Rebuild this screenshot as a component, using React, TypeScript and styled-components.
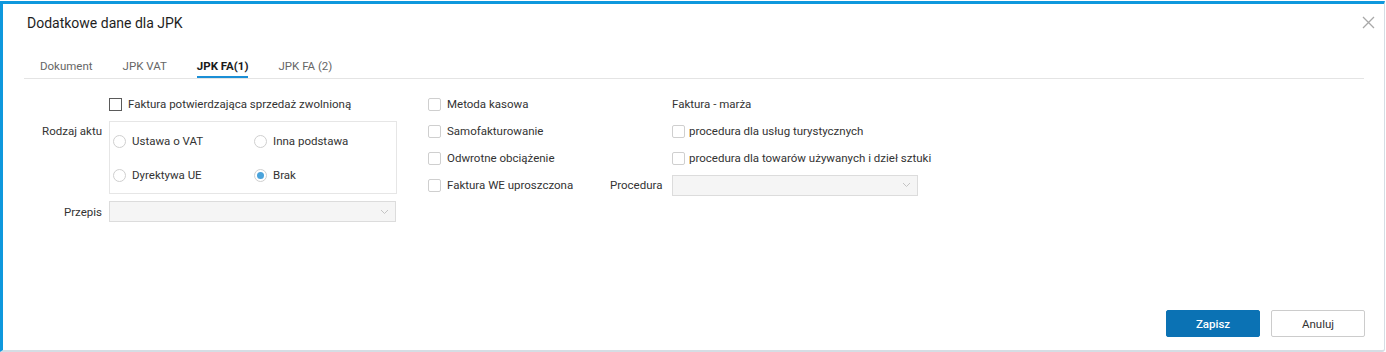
import React from 'react';
import styled, { createGlobalStyle } from 'styled-components';

const GlobalStyle = createGlobalStyle`
  html, body {
    margin: 0;
    padding: 0;
    background: #ffffff;
  }
  body {
    font-family: Roboto, "Noto Sans", "Liberation Sans", sans-serif;
    font-size: 11.5px;
    color: #333333;
  }
`;

const Page = styled.div`
  padding-top: 1px;
`;

const Dialog = styled.div`
  box-sizing: border-box;
  width: 1385px;
  height: 351px;
  display: flex;
  flex-direction: column;
  background: #ffffff;
  border-top: 3px solid #0f98dd;
  border-left: 3px solid #0f98dd;
  border-right: 1px solid #d5dde4;
  border-bottom: 2px solid #d5dde4;
  border-radius: 0 0 3px 0;
`;

const Header = styled.div`
  display: flex;
  justify-content: space-between;
  align-items: flex-start;
  padding: 10px 9px 0 24px;
`;

const Title = styled.h1`
  margin: 0;
  font-size: 14px;
  line-height: 18px;
  font-weight: 400;
  color: #1e1e1e;
`;

const CloseButton = styled.button`
  margin-top: 2px;
  padding: 0;
  width: 13px;
  height: 13px;
  border: none;
  background: none;
  cursor: pointer;
  display: flex;

  svg {
    width: 13px;
    height: 13px;
  }
`;

const TabBar = styled.div`
  display: flex;
  gap: 30px;
  margin: 26px 20px 0 21px;
  padding-left: 16px;
  border-bottom: 1px solid #e4e4e4;
`;

const Tab = styled.div<{ $active?: boolean }>`
  font-size: 11.5px;
  line-height: 16px;
  padding-bottom: 2px;
  color: ${p => (p.$active ? '#1b1b1b' : '#666666')};
  font-weight: ${p => (p.$active ? 700 : 400)};
  border-bottom: 2px solid ${p => (p.$active ? '#1b8fd6' : 'transparent')};
`;

const Content = styled.div`
  flex: 1;
  display: flex;
  align-items: flex-start;
  gap: 31px;
  padding: 15px 0 0 24px;
`;

const LeftGrid = styled.div`
  display: grid;
  grid-template-columns: 76px 288px;
  column-gap: 6px;
  row-gap: 7px;
`;

const FieldLabel = styled.div<{ $top?: boolean }>`
  text-align: right;
  line-height: 20px;
  color: #333333;
  align-self: ${p => (p.$top ? 'start' : 'center')};
  padding-right: 1px;
`;

const CheckRow = styled.label<{ $gap?: number }>`
  display: flex;
  align-items: center;
  gap: ${p => p.$gap ?? 6}px;
  height: 20px;
  white-space: nowrap;
  color: #333333;
`;

const CheckBox = styled.span<{ $dark?: boolean }>`
  box-sizing: border-box;
  width: 13px;
  height: 13px;
  flex-shrink: 0;
  border: 1px solid ${p => (p.$dark ? '#5a5a5a' : '#cfcfcf')};
  border-radius: ${p => (p.$dark ? '0' : '2px')};
  background: #ffffff;
`;

const RadioBox = styled.div`
  box-sizing: border-box;
  height: 73px;
  border: 1px solid #e6e6e6;
  padding: 9px 3px 0;
  display: grid;
  grid-template-columns: 141px 1fr;
  grid-auto-rows: 20px;
  row-gap: 14px;
`;

const RadioRow = styled.label`
  display: flex;
  align-items: center;
  gap: 6px;
  color: #333333;
  white-space: nowrap;
`;

const RadioCircle = styled.span<{ $checked?: boolean }>`
  box-sizing: border-box;
  width: 13px;
  height: 13px;
  border-radius: 50%;
  border: 1px solid #cfcfcf;
  background: #ffffff;
  display: flex;
  align-items: center;
  justify-content: center;

  &::after {
    content: '';
    width: 7px;
    height: 7px;
    border-radius: 50%;
    background: ${p => (p.$checked ? '#4aa3db' : 'transparent')};
  }
`;

const Select = styled.div<{ $width: number }>`
  box-sizing: border-box;
  width: ${p => p.$width}px;
  height: 21px;
  border: 1px solid #dcdcdc;
  background: #f5f5f5;
  display: flex;
  align-items: center;
  justify-content: flex-end;
  padding-right: 6px;

  svg {
    width: 9px;
    height: 6px;
  }
`;

const MiddleGrid = styled.div`
  display: grid;
  grid-template-columns: 177px 57px 246px;
  column-gap: 5px;
  grid-auto-rows: 20px;
  row-gap: 7px;
  align-items: center;
`;

const GroupTitle = styled.div`
  line-height: 20px;
  color: #333333;
`;

const InlineLabel = styled.div`
  line-height: 20px;
  color: #333333;
  white-space: nowrap;
`;

const Footer = styled.div`
  display: flex;
  justify-content: flex-end;
  gap: 11px;
  padding: 0 19px 13px 0;
`;

const Button = styled.button<{ $primary?: boolean }>`
  box-sizing: border-box;
  width: 94px;
  height: 27px;
  border-radius: 2px;
  font-family: inherit;
  font-size: 11.5px;
  font-weight: ${p => (p.$primary ? 500 : 400)};
  color: ${p => (p.$primary ? '#ffffff' : '#333333')};
  background: ${p => (p.$primary ? '#0b72b4' : '#ffffff')};
  border: 1px solid ${p => (p.$primary ? '#0b72b4' : '#cccccc')};
  cursor: pointer;
`;

const Chevron = () => (
  <svg viewBox="0 0 9 6" fill="none">
    <path d="M1 1l3.5 3.5L8 1" stroke="#c4c4c4" strokeWidth="1" />
  </svg>
);

const App: React.FC = () => {
  const tabs = ['Dokument', 'JPK VAT', 'JPK FA(1)', 'JPK FA (2)'];

  return (
    <Page>
      <GlobalStyle />
      <Dialog>
        <Header>
          <Title>Dodatkowe dane dla JPK</Title>
          <CloseButton aria-label="Zamknij">
            <svg viewBox="0 0 13 13" fill="none">
              <path d="M1 1l11 11M12 1L1 12" stroke="#a8a8a8" strokeWidth="1.3" />
            </svg>
          </CloseButton>
        </Header>

        <TabBar>
          {tabs.map(t => (
            <Tab key={t} $active={t === 'JPK FA(1)'}>{t}</Tab>
          ))}
        </TabBar>

        <Content>
          <LeftGrid>
            <div />
            <CheckRow>
              <CheckBox $dark />
              Faktura potwierdzająca sprzedaż zwolnioną
            </CheckRow>

            <FieldLabel $top>Rodzaj aktu</FieldLabel>
            <RadioBox>
              <RadioRow><RadioCircle />Ustawa o VAT</RadioRow>
              <RadioRow><RadioCircle />Inna podstawa</RadioRow>
              <RadioRow><RadioCircle />Dyrektywa UE</RadioRow>
              <RadioRow><RadioCircle $checked />Brak</RadioRow>
            </RadioBox>

            <FieldLabel>Przepis</FieldLabel>
            <Select $width={287}><Chevron /></Select>
          </LeftGrid>

          <MiddleGrid>
            <CheckRow><CheckBox />Metoda kasowa</CheckRow>
            <div />
            <GroupTitle>Faktura - marża</GroupTitle>

            <CheckRow><CheckBox />Samofakturowanie</CheckRow>
            <div />
            <CheckRow $gap={4}><CheckBox />procedura dla usług turystycznych</CheckRow>

            <CheckRow><CheckBox />Odwrotne obciążenie</CheckRow>
            <div />
            <CheckRow $gap={4}><CheckBox />procedura dla towarów używanych i dzieł sztuki</CheckRow>

            <CheckRow><CheckBox />Faktura WE uproszczona</CheckRow>
            <InlineLabel>Procedura</InlineLabel>
            <Select $width={246}><Chevron /></Select>
          </MiddleGrid>
        </Content>

        <Footer>
          <Button $primary>Zapisz</Button>
          <Button>Anuluj</Button>
        </Footer>
      </Dialog>
    </Page>
  );
};

export default App;
